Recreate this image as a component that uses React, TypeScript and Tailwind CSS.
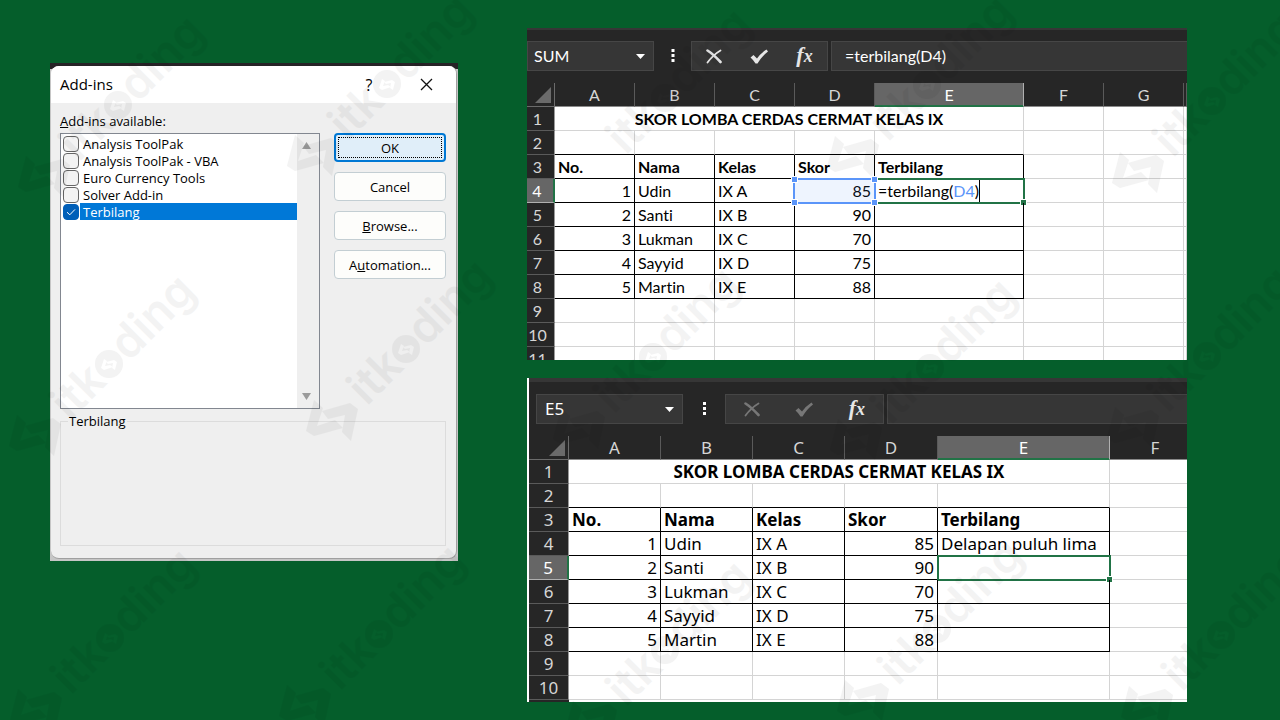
import { useState } from 'react';
import clsx from 'clsx';

const MARK_LEFT = 'M-92 51L-100 82L-92 87L-63 79L-71 71L-89 77L-83 59Z';
const MARK_RIGHT = 'M-84 62L-56 54L-48 60L-55 92L-64 83L-61 66L-78 70Z';
const DISC =
  'M-14 0A14 14 0 1 0 14 0A14 14 0 1 0 -14 0Z' +
  'M-5 -5L-8 4L-5 6L4 3L1 1L-4 2L-2 -3Z' +
  'M-3 -2L5 -4L8 -2L6 6L3 4L4 -1L-1 0Z';

const MARKS = [
  { x: 118, y: 105 },
  { x: 387, y: 84 },
  { x: 665, y: 98, textOnly: true },
  { x: 927, y: 85 },
  { x: 1212, y: 101 },
  { x: 109, y: 364 },
  { x: 406, y: 349 },
  { x: 653, y: 357 },
  { x: 930, y: 368 },
  { x: 1207, y: 356 },
  { x: 110, y: 638 },
  { x: 379, y: 634 },
  { x: 665, y: 650 },
  { x: 937, y: 629 },
  { x: 1221, y: 635 },
];

function Watermarks() {
  return (
    <svg
      className="pointer-events-none absolute left-0 top-0 h-[720px] w-[1280px] font-['Inter',sans-serif] text-[46px] font-semibold opacity-[0.045]"
      viewBox="0 0 1280 720"
      aria-hidden="true"
    >
      {MARKS.map((m) => (
        <g key={`${m.x}-${m.y}`} transform={`translate(${m.x} ${m.y})`}>
          {!m.textOnly && <path d={MARK_LEFT} />}
          {!m.textOnly && <path d={MARK_RIGHT} />}
          <path d={DISC} fillRule="evenodd" />
          <g transform="rotate(-45)">
            <text x="-14" y="13" textAnchor="end">itk</text>
            <text x="15" y="13">ding</text>
          </g>
        </g>
      ))}
    </svg>
  );
}

const dialogButton =
  'h-[29px] w-full rounded border border-[#c3ced3] bg-[#fdfdfb] pt-0.5 text-center text-[13px] leading-none';

function AddInsDialog() {
  const [items, setItems] = useState([
    { name: 'Analysis ToolPak', checked: false },
    { name: 'Analysis ToolPak - VBA', checked: false },
    { name: 'Euro Currency Tools', checked: false },
    { name: 'Solver Add-in', checked: false },
    { name: 'Terbilang', checked: true },
  ]);
  const [selected, setSelected] = useState('Terbilang');

  const toggle = (name: string) => {
    setSelected(name);
    setItems(items.map((i) => (i.name === name ? { ...i, checked: !i.checked } : i)));
  };

  return (
    <div className="bg-[linear-gradient(#262326_0_6px,#c6c6c6_6px)] px-px pb-0.5 pt-[3px] font-['Open_Sans','Noto_Sans',sans-serif] text-[13px] text-black">
      <div role="dialog" aria-label="Add-ins" className="overflow-hidden rounded-lg border-b border-r border-[#a0a0a0] bg-[#efefef]">
        <div className="flex h-[37px] items-center bg-white pl-[9px]">
          <h1 className="flex-1 text-[15px]">Add-ins</h1>
          <button type="button" aria-label="Help" className="w-8 text-base">?</button>
          <button type="button" aria-label="Close" className="ml-[24px] mr-[13px] flex w-[34px] justify-center">
            <svg className="size-[13px]" viewBox="0 0 13 13" fill="none" stroke="#111" strokeWidth="1.3">
              <path d="M1 1L12 12M12 1L1 12" />
            </svg>
          </button>
        </div>

        <div className="px-[9px] pb-3 pt-2">
          <p className="h-[22px] leading-5"><u>A</u>dd-ins available:</p>
          <div className="flex gap-3.5 pr-px">
            <div className="flex h-[276px] flex-1 border border-[#828790] bg-white">
              <ul className="flex-1 pl-0.5 pt-px">
                {items.map((item) => (
                  <li key={item.name} className="h-[17px]">
                    <label className="flex h-[17px] items-center gap-px">
                      <span className="relative flex size-4">
                        <input
                          type="checkbox"
                          checked={item.checked}
                          onChange={() => toggle(item.name)}
                          className="size-4 appearance-none rounded border border-[#666] bg-[#f3f3f3] checked:border-[#005fb8] checked:bg-[#005fb8]"
                        />
                        {item.checked && (
                          <svg className="pointer-events-none absolute inset-0 size-4" viewBox="0 0 16 16" fill="none" stroke="#fff">
                            <path d="M4 8.2L6.8 10.8L12 5.4" />
                          </svg>
                        )}
                      </span>
                      <span
                        className={clsx(
                          'h-[17px] flex-1 pl-[3px] leading-[18px]',
                          selected === item.name && 'bg-[#0078d7] text-white'
                        )}
                      >
                        {item.name}
                      </span>
                    </label>
                  </li>
                ))}
              </ul>
              <div className="flex w-[22px] flex-col items-center justify-between bg-[#efefef] py-2">
                <button type="button" aria-label="Scroll up" className="pr-1">
                  <svg className="h-[7px] w-[9px]" viewBox="0 0 9 7" fill="#9b9b9b"><path d="M4.5 0L9 7H0Z" /></svg>
                </button>
                <button type="button" aria-label="Scroll down" className="pr-1">
                  <svg className="h-[7px] w-[9px]" viewBox="0 0 9 7" fill="#9b9b9b"><path d="M4.5 7L9 0H0Z" /></svg>
                </button>
              </div>
            </div>

            <div className="flex w-28 flex-col gap-2.5">
              <button type="button" className="h-[29px] rounded border-2 border-[#0078d4] bg-[#e0eef9] p-0.5 text-[13px] leading-none">
                <span className="flex h-full items-center justify-center border border-dotted border-black pt-0.5">OK</span>
              </button>
              <button type="button" className={dialogButton}>Cancel</button>
              <button type="button" className={dialogButton}><u>B</u>rowse...</button>
              <button type="button" className={dialogButton}>A<u>u</u>tomation...</button>
            </div>
          </div>

          <fieldset className="mr-px mt-0.5 h-[135px] border border-[#dcdcdc] pl-[7px]">
            <legend className="px-px leading-5">{selected}</legend>
          </fieldset>
        </div>
      </div>
    </div>
  );
}

interface FormulaBarProps {
  cell: string;
  formula: string;
  editing?: boolean;
  className: string;
  nameClass: string;
  dotsClass: string;
  toolsClass: string;
}

function FormulaBar({ cell, formula, editing, className, nameClass, dotsClass, toolsClass }: FormulaBarProps) {
  const box = 'flex h-[30px] items-center border border-[#464646] bg-[#363636]';
  return (
    <div className={clsx('flex items-center pb-3 text-white', className)}>
      <div className={clsx(box, nameClass)}>
        <input aria-label="Name box" defaultValue={cell} className="min-w-0 flex-1 bg-transparent outline-none" />
        <button type="button" aria-label="Open name list" className="px-2">
          <svg className="h-[5px] w-[9px]" viewBox="0 0 9 5" fill="#fff"><path d="M0 0H9L4.5 5Z" /></svg>
        </button>
      </div>
      <svg className={clsx('h-4', dotsClass)} viewBox="0 0 16 16" fill="#fff">
        <path d="M7 1h3v3h-3zM7 6h3v3h-3zM7 11h3v3h-3z" />
      </svg>
      <div className={clsx(box, toolsClass)}>
        <button type="button" aria-label="Cancel entry" className={clsx('flex flex-1 justify-center', editing ? 'text-[#e6e6e6]' : 'text-[#777]')}>
          <svg className="h-[15px] w-[17px]" viewBox="0 0 17 15" fill="none" stroke="currentColor" strokeLinecap="round">
            <path d="M1.5 1.5Q7 5 14.5 13" strokeWidth="2.6" />
            <path d="M14.5 1.5Q7 6 1.5 13.5" strokeWidth="1.8" />
          </svg>
        </button>
        <button type="button" aria-label="Enter" className={clsx('flex flex-1 justify-center', editing ? 'text-[#e6e6e6]' : 'text-[#777]')}>
          <svg className="h-[15px] w-[19px]" viewBox="0 0 19 15" fill="currentColor">
            <path d="M0.5 8.5L3.5 6L7 9.5Q11 4 16.5 0.5L18 2.5Q12 7 7.5 14.5H5.5Q3.5 11 0.5 8.5Z" />
          </svg>
        </button>
        <button type="button" aria-label="Insert function" className="flex-1 text-center font-['Liberation_Serif',serif] text-[22px] font-bold italic leading-6 text-[#e6e6e6]">
          f<span className="text-lg">x</span>
        </button>
      </div>
      <div className={clsx(box, 'ml-[3px] min-w-0 flex-1 border-r-0 pl-[13px]')}>
        <input aria-label="Formula bar" defaultValue={formula} className="w-full bg-transparent outline-none" />
      </div>
    </div>
  );
}

const STUDENTS = [
  ['1', 'Udin', 'IX A', '85'],
  ['2', 'Santi', 'IX B', '90'],
  ['3', 'Lukman', 'IX C', '70'],
  ['4', 'Sayyid', 'IX D', '75'],
  ['5', 'Martin', 'IX E', '88'],
];
const HEADINGS = ['No.', 'Nama', 'Kelas', 'Skor', 'Terbilang'];

function Handle({ className }: { className: string }) {
  return <span className={clsx('absolute size-[7px] border border-white', className)} />;
}

interface SheetProps {
  columns: string[];
  widths: string[];
  className: string;
  headWidth: string;
  headPad: string;
  lastRow: number;
  activeRow: number;
  editing?: boolean;
  results: string[];
}

function Sheet({ columns, widths, className, headWidth, headPad, lastRow, activeRow, editing, results }: SheetProps) {
  const extra = columns.slice(5);
  const rows = Array.from({ length: lastRow }, (_, i) => i + 1);
  const plain = 'border-b border-r border-[#d4d4d4]';
  const ruled = 'border-b border-r border-black';

  const renderCells = (row: number) => {
    if (row === 1) {
      return (
        <td colSpan={5} className={clsx(plain, 'text-center font-bold')}>
          SKOR LOMBA CERDAS CERMAT KELAS IX
        </td>
      );
    }
    if (row === 2) {
      return HEADINGS.map((h) => <td key={h} className="border-b border-r border-b-black border-r-[#d4d4d4]" />);
    }
    if (row === 3) {
      return HEADINGS.map((h) => (
        <td key={h} className={clsx(ruled, 'px-[3px] font-bold')}>{h}</td>
      ));
    }
    const student = STUDENTS[row - 4];
    if (!student) {
      return HEADINGS.map((h) => <td key={h} className={plain} />);
    }
    const active = row === activeRow;
    return (
      <>
        {student.map((value, i) => (
          <td key={HEADINGS[i]} className={clsx(ruled, 'relative px-[3px]', (i === 0 || i === 3) && 'text-right')}>
            {editing && active && i === 3 && (
              <span className="absolute -bottom-0.5 -left-0.5 -right-0.5 -top-px z-10 border-2 border-[#5b95f9] bg-[#5b95f9]/10">
                <Handle className="-left-1 -top-1 bg-[#5b95f9]" />
                <Handle className="-right-1 -top-1 bg-[#5b95f9]" />
                <Handle className="-bottom-1 -left-1 bg-[#5b95f9]" />
                <Handle className="-bottom-1 -right-1 bg-[#5b95f9]" />
              </span>
            )}
            {value}
          </td>
        ))}
        <td className={clsx(ruled, 'relative px-[3px]')}>
          {active && (
            <span className="absolute -bottom-0.5 -left-px -right-0.5 -top-px border-2 border-[#217346]">
              <Handle className="-bottom-1 -right-1 bg-[#217346]" />
            </span>
          )}
          {editing && active ? (
            <span className="inline-block border-r border-black">
              =terbilang(<span className="text-[#5b95f9]">D4</span>)
            </span>
          ) : (
            results[row - 4]
          )}
        </td>
      </>
    );
  };

  return (
    <table className={clsx('table-fixed border-separate border-spacing-0 bg-white leading-[22px] text-black', className)}>
      <colgroup>
        <col className={headWidth} />
        {widths.map((w, i) => <col key={columns[i]} className={w} />)}
        <col />
      </colgroup>
      <thead>
        <tr className="h-6 bg-[#262626] text-[#d6d6d6]">
          <td className="border-b border-r border-[#6b6b6b] p-0">
            <svg className="ml-auto mr-[3px] size-4" viewBox="0 0 16 16" fill="#6b6b6b"><path d="M16 0V16H0Z" /></svg>
          </td>
          {columns.map((c) => (
            <th
              key={c}
              scope="col"
              className={clsx(
                'overflow-hidden border-b border-r p-0 font-normal',
                c === 'E'
                  ? 'border-b-[#217346] border-r-[#b0b0b0] bg-[#666] text-white shadow-[inset_0_-1px_#217346]'
                  : 'border-b-[#8a8a8a] border-r-[#5a5a5a]'
              )}
            >
              {c}
            </th>
          ))}
        </tr>
      </thead>
      <tbody>
        {rows.map((row) => (
          <tr key={row} className="h-6">
            <th
              scope="row"
              className={clsx(
                'border-b p-0 text-center font-normal',
                headPad,
                row === activeRow
                  ? 'border-r-2 border-b-[#b0b0b0] border-r-[#217346] bg-[#666] text-white'
                  : 'border-r border-b-[#5a5a5a] border-r-[#9a9a9a] bg-[#262626] text-[#d6d6d6]'
              )}
            >
              {row}
            </th>
            {renderCells(row)}
            {extra.map((c) => <td key={c} className={plain} />)}
          </tr>
        ))}
        <tr className="h-0.5">
          <td className="bg-[#262626] p-0" />
        </tr>
      </tbody>
    </table>
  );
}

export default function App() {
  return (
    <main className="relative flex min-h-screen items-start overflow-hidden bg-[#055e2b] pl-[50px] pr-[93px]">
      <div className="mr-[69px] w-[408px] shrink-0 pt-[63px]">
        <AddInsDialog />
      </div>

      <div className="flex min-w-0 flex-1 flex-col gap-[18px] pt-7">
        <section className="h-[332px] overflow-hidden border-t-2 border-[#363636] bg-[#262626] font-['Lato',sans-serif] text-base [font-variant-ligatures:none]">
          <FormulaBar
            cell="SUM"
            formula="=terbilang(D4)"
            editing
            className="pt-[11px]"
            nameClass="w-[127px] pl-1.5"
            dotsClass="w-[37px]"
            toolsClass="w-[137px]"
          />
          <Sheet
            columns={['A', 'B', 'C', 'D', 'E', 'F', 'G', '']}
            widths={['w-20', 'w-20', 'w-20', 'w-20', 'w-[149px]', 'w-20', 'w-20']}
            className="w-full"
            headWidth="w-7"
            headPad="pr-1.5"
            lastRow={11}
            activeRow={4}
            editing
            results={[]}
          />
        </section>

        <section className="overflow-hidden border-l-2 border-white bg-[#262626] font-['Noto_Sans','Open_Sans',sans-serif] text-[17px]">
          <div className="h-1 bg-[#363636]" />
          <FormulaBar
            cell="E5"
            formula=""
            className="pl-[7px] pt-3"
            nameClass="w-[147px] pl-2"
            dotsClass="w-[42px]"
            toolsClass="w-[159px]"
          />
          <Sheet
            columns={['A', 'B', 'C', 'D', 'E', 'F']}
            widths={['w-[92px]', 'w-[92px]', 'w-[92px]', 'w-[93px]', 'w-[172px]']}
            className="w-[calc(100%+14px)]"
            headWidth="w-10"
            headPad=""
            lastRow={10}
            activeRow={5}
            results={['Delapan puluh lima']}
          />
        </section>
      </div>

      <Watermarks />
    </main>
  );
}
